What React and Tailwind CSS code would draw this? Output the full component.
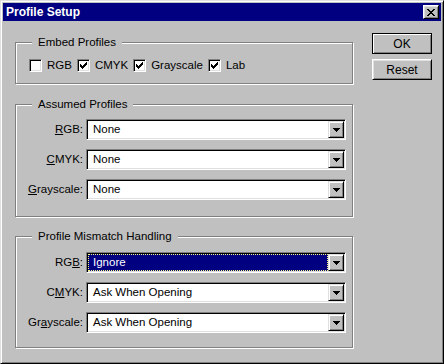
import { useState } from "react";

function CheckBox({ checked, label }) {
	return (
		<label className="flex items-center">
			<span className="w-[13px] h-[13px] flex items-center justify-center bg-white border border-t-[#808080] border-l-[#808080] border-b-white border-r-white shadow-[inset_1px_1px_0_#000,inset_-1px_-1px_0_#dfdfdf]">
				{checked && (
					<svg width="7" height="7" viewBox="0 0 7 7" shapeRendering="crispEdges">
						<path
							d="M0 2h1v3h-1zM1 3h1v3h-1zM2 4h1v3h-1zM3 3h1v3h-1zM4 2h1v3h-1zM5 1h1v3h-1zM6 0h1v3h-1z"
							fill="#000"
						/>
					</svg>
				)}
			</span>
			<span className="ml-[5px]">{label}</span>
		</label>
	);
}

function DropSelect({ value, active }) {
	return (
		<div className="w-[260px] h-[21px] flex bg-white p-px border border-t-[#808080] border-l-[#808080] border-b-white border-r-white shadow-[inset_1px_1px_0_#000,inset_-1px_-1px_0_#dfdfdf]">
			{active ? (
				<div className="flex-1 flex items-center bg-[#000080] text-white pl-[4px] border border-dotted border-[#ffff80]">
					{value}
				</div>
			) : (
				<div className="flex-1 flex items-center pl-[5px]">{value}</div>
			)}
			<div className="w-[16px] h-full flex items-center justify-center bg-[#c0c0c0] border border-t-[#dfdfdf] border-l-[#dfdfdf] border-b-black border-r-black shadow-[inset_1px_1px_0_#fff,inset_-1px_-1px_0_#808080]">
				<svg width="7" height="4" viewBox="0 0 7 4" shapeRendering="crispEdges">
					<path d="M0 0h7v1h-1v1h-1v1h-1v1h-1v-1h-1v-1h-1v-1h-1z" fill="#000" />
				</svg>
			</div>
		</div>
	);
}

function Row({ label, value, active }) {
	return (
		<div className="flex items-center">
			<div className="w-[67px] text-right">{label}</div>
			<div className="ml-[3px]">
				<DropSelect value={value} active={active} />
			</div>
		</div>
	);
}

function Group({ title, className, children }) {
	return (
		<fieldset
			className={
				"w-[338px] border border-[#808080] shadow-[inset_1px_1px_0_#fff,1px_1px_0_#fff] " +
				className
			}
		>
			<legend className="ml-[16px] px-[6px] bg-[#c0c0c0] leading-[14px]">{title}</legend>
			{children}
		</fieldset>
	);
}

export default function App() {
	const [embed] = useState({ rgb: false, cmyk: true, gray: true, lab: true });

	return (
		<div className="w-[444px] h-[364px] bg-[#c0c0c0] p-[2px] border border-t-[#dfdfdf] border-l-[#dfdfdf] border-b-black border-r-black shadow-[inset_1px_1px_0_#fff,inset_-1px_-1px_0_#808080] text-black text-[11.5px] font-['Liberation_Sans',Arial,sans-serif]">
			{/* title bar */}
			<div className="h-[18px] flex items-center bg-[#000080] text-white">
				<span className="pl-[3px] text-[12px] font-bold">Profile Setup</span>
				<button className="ml-auto mr-[2px] w-[16px] h-[14px] flex items-center justify-center bg-[#c0c0c0] border border-t-white border-l-white border-b-black border-r-black shadow-[inset_1px_1px_0_#dfdfdf,inset_-1px_-1px_0_#808080]">
					<svg width="8" height="7" viewBox="0 0 8 7" shapeRendering="crispEdges">
						<path
							d="M0 0h2v1h-2zM6 0h2v1h-2zM1 1h2v1h-2zM5 1h2v1h-2zM2 2h4v1h-4zM3 3h2v1h-2zM2 4h4v1h-4zM1 5h2v1h-2zM5 5h2v1h-2zM0 6h2v1h-2zM6 6h2v1h-2z"
							fill="#000"
						/>
					</svg>
				</button>
			</div>

			<div className="flex items-start">
				{/* left column */}
				<div className="mt-[14px] ml-[12px] flex flex-col">
					<Group title="Embed Profiles" className="h-[49px]">
						<div className="flex items-center gap-[5px] pl-[13px] pt-[8px]">
							<CheckBox checked={embed.rgb} label="RGB" />
							<CheckBox checked={embed.cmyk} label="CMYK" />
							<CheckBox checked={embed.gray} label="Grayscale" />
							<CheckBox checked={embed.lab} label="Lab" />
						</div>
					</Group>

					<Group title="Assumed Profiles" className="h-[120px] mt-[13px]">
						<div className="flex flex-col gap-[9px] pt-[8px]">
							<Row label={<><u>R</u>GB:</>} value="None" />
							<Row label={<><u>C</u>MYK:</>} value="None" />
							<Row label={<><u>G</u>rayscale:</>} value="None" />
						</div>
					</Group>

					<Group title="Profile Mismatch Handling" className="h-[119px] mt-[12px]">
						<div className="flex flex-col gap-[9px] pt-[9px]">
							<Row label={<>RG<u>B</u>:</>} value="Ignore" active />
							<Row label={<>C<u>M</u>YK:</>} value="Ask When Opening" />
							<Row label={<>Gr<u>a</u>yscale:</>} value="Ask When Opening" />
						</div>
					</Group>
				</div>

				{/* right column */}
				<div className="mt-[12px] ml-[19px] flex flex-col gap-[5px]">
					<button className="w-[60px] h-[21px] bg-[#c0c0c0] text-[12px] border border-black shadow-[inset_1px_1px_0_#fff,inset_-1px_-1px_0_#808080]">
						OK
					</button>
					<button className="w-[60px] h-[21px] bg-[#c0c0c0] text-[12px] border border-t-white border-l-white border-b-black border-r-black shadow-[inset_1px_1px_0_#dfdfdf,inset_-1px_-1px_0_#808080]">
						Reset
					</button>
				</div>
			</div>
		</div>
	);
}
